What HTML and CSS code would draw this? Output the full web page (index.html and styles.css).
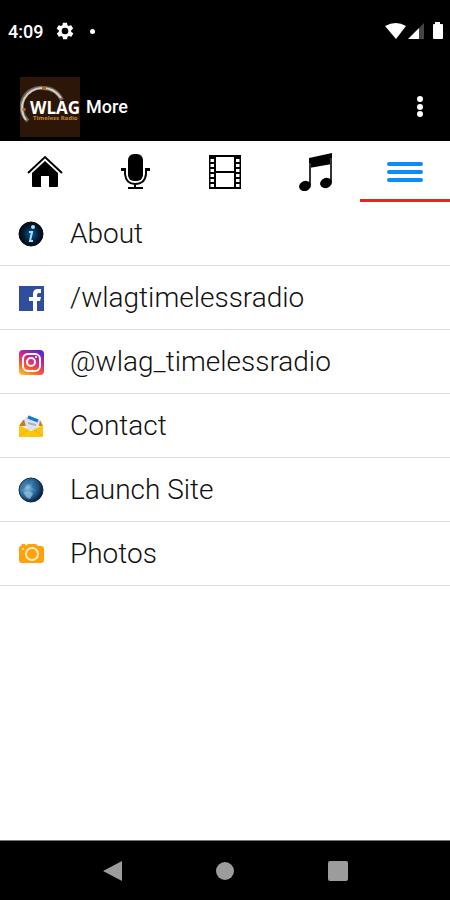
FILE: index.html
```html
<!DOCTYPE html>
<html lang="en">
  <head>
    <meta charset="UTF-8" />
    <meta name="viewport" content="width=device-width, initial-scale=1" />
    <title>WLAG - More</title>
    <link rel="stylesheet" href="styles.css">
  </head>
  <body>
    <div class="status-bar">
      <span class="clock">4:09</span>
      <svg class="gear" viewBox="0 0 24 24" width="20" height="20">
        <path fill="#fff" d="M19.4 13a7.500 7.500 0 0 0 0-2l2.100-1.600a.5.5 0 0 0 .1-.7l-2-3.400a.5.5 0 0 0-.6-.2l-2.500 1a7 7 0 0 0-1.700-1l-.4-2.700a.5.5 0 0 0-.5-.4h-4a.5.5 0 0 0-.5.4l-.4 2.700a7 7 0 0 0-1.700 1l-2.500-1a.5.5 0 0 0-.6.200l-2 3.400a.5.5 0 0 0 .1.700L4.600 11a7.500 7.500 0 0 0 0 2l-2.100 1.600a.5.5 0 0 0-.1.700l2 3.400c.1.200.4.300.6.200l2.500-1a7 7 0 0 0 1.700 1l.4 2.700c0 .2.200.4.5.4h4c.3 0 .5-.2.500-.4l.4-2.700a7 7 0 0 0 1.700-1l2.500 1c.2.1.5 0 .6-.2l2-3.400a.5.5 0 0 0-.1-.7zM12 16a4 4 0 1 1 0-8 4 4 0 0 1 0 8z" />
      </svg>
      <span class="dot"></span>
      <svg class="signals" viewBox="0 0 60 20" width="60" height="20">
        <path fill="#fff" d="M0 5Q11-1 21 5L11 18z" />
        <path fill="#fff" d="M23 18L34 7V18z" />
        <path fill="#444" d="M34 7L39 2V18H34z" />
        <path fill="#fff" d="M50 1h5v2h2q1 0 1 1v13q0 1-1 1h-8q-1 0-1-1V4q0-1 1-1h1z" />
      </svg>
    </div>

    <header class="app-bar">
      <svg class="logo" viewBox="0 0 60 60" width="60" height="60">
        <rect width="60" height="60" fill="#2b1607" />
        <path d="M8 44A19 19 0 0 1 23 11Q36 11 42 23" fill="none" stroke="#6f625b" stroke-width="4" />
        <path d="M6 43A20 20 0 0 1 23 11Q34 11 41 21" fill="none" stroke="#d5cdc8" stroke-width="2" />
        <path d="M22 11h4M4 31v3" stroke="#b5681c" stroke-width="3" />
        <text class="logo-name" x="10" y="37">WLAG</text>
        <text class="logo-tag" x="13" y="43">Timeless Radio</text>
      </svg>
      <h1>More</h1>
      <button class="overflow" type="button" aria-label="More options">
        <svg viewBox="0 0 24 24" width="24" height="24">
          <circle cx="12" cy="4" r="3" />
          <circle cx="12" cy="12" r="3" />
          <circle cx="12" cy="19" r="3" />
        </svg>
      </button>
    </header>

    <nav class="tabs">
      <a href="#home" aria-label="Home">
        <svg viewBox="0 0 36 36" width="36" height="36">
          <path d="M1 19L18 3L35 19" fill="none" stroke="#000" stroke-width="2" />
          <path d="M18 7L31 19V32Q31 33 30 33H22V22H14V33H6Q5 33 5 32V19z" />
        </svg>
      </a>
      <a href="#listen" aria-label="Listen">
        <svg viewBox="0 0 36 36" width="36" height="36">
          <rect x="11" y="0" width="15" height="27" rx="6" />
          <path d="M8 15V20Q9 30 18 30Q28 30 29 20V15M18 30V35" fill="none" stroke="#000" stroke-width="2" />
          <path d="M4 14h5v3H4zM28 14h5v3h-5zM11 33h15v2H11z" />
        </svg>
      </a>
      <a href="#videos" aria-label="Videos">
        <svg viewBox="0 0 36 36" width="36" height="36" fill="none" stroke="#000">
          <path d="M3 2H33V34H3zM8 2V34M28 2V34M8 18H28" stroke-width="2" />
          <path d="M5 4V33M31 4V33" stroke="#fff" stroke-width="3" />
          <path d="M5 3V34M31 3V34" stroke-width="4" stroke-dasharray="2 3" />
        </svg>
      </a>
      <a href="#music" aria-label="Music">
        <svg viewBox="0 0 36 38" width="36" height="38">
          <path d="M12 5L35 0V11L12 15z" />
          <path d="M13 10V32M34 5V29" fill="none" stroke="#333" stroke-width="2" />
          <ellipse cx="8" cy="33" rx="6" ry="5" transform="rotate(-20 8 33)" />
          <ellipse cx="29" cy="30" rx="6" ry="5" transform="rotate(-20 29 30)" />
        </svg>
      </a>
      <a class="active" href="#more" aria-label="More">
        <svg viewBox="0 0 36 36" width="36" height="36">
          <path d="M2 10H34M2 18H34M2 26H34" stroke="#0c8df5" stroke-width="4" stroke-linecap="round" />
        </svg>
      </a>
    </nav>

    <main>
      <ul class="menu">
        <li>
          <a href="#about">
            <svg viewBox="0 0 26 26" width="26" height="26">
              <defs>
                <radialGradient id="infoGlow">
                  <stop offset="0" stop-color="#0b5c98" />
                  <stop offset="0.600" stop-color="#03203a" />
                  <stop offset="1" stop-color="#04090f" />
                </radialGradient>
              </defs>
              <circle cx="13" cy="13" r="12" fill="url(#infoGlow)" stroke="#061018" />
              <circle cx="15" cy="6" r="2" fill="#9fe3ff" />
              <path d="M11 11H14L12 20H15" fill="none" stroke="#9fe3ff" stroke-width="2" />
            </svg>
            About
          </a>
        </li>
        <li>
          <a href="#facebook">
            <svg viewBox="0 0 26 26" width="26" height="26">
              <rect x="1" y="1" width="25" height="25" fill="#2f4f9e" />
              <path d="M15 26V16H11V12H15V9Q15 4 20 4H23V8H21Q19 8 19 10V12H23L22 16H19V26z" fill="#fff" />
            </svg>
            /wlagtimelessradio
          </a>
        </li>
        <li>
          <a href="#instagram">
            <svg viewBox="0 0 26 26" width="26" height="26">
              <defs>
                <linearGradient id="insta" x1="0.200" y1="1" x2="0.700" y2="0">
                  <stop offset="0" stop-color="#ffb52b" />
                  <stop offset="0.300" stop-color="#fa5a2a" />
                  <stop offset="0.600" stop-color="#d62a86" />
                  <stop offset="1" stop-color="#5b28cc" />
                </linearGradient>
              </defs>
              <rect x="1" y="1" width="25" height="25" rx="4" fill="url(#insta)" />
              <rect x="5" y="5" width="17" height="17" rx="5" fill="none" stroke="#fff" stroke-width="2" />
              <circle cx="13" cy="13" r="4" fill="none" stroke="#fff" stroke-width="2" />
              <circle cx="18" cy="8" r="1" fill="#fff" />
            </svg>
            @wlag_timelessradio
          </a>
        </li>
        <li>
          <a href="#contact">
            <svg viewBox="0 0 26 26" width="26" height="26">
              <path d="M1 13L5 7H22L25 13z" fill="#c77a2b" />
              <path d="M6 6L11 2L22 7L20 17H9z" fill="#dce5ec" />
              <path d="M10 4L20 8" stroke="#1976c9" stroke-width="3" />
              <path d="M10 10L18 12" stroke="#a6b4c1" stroke-width="2" />
              <path d="M1 12L13 18L25 12V23Q25 24 24 24H2Q1 24 1 23z" fill="#fcc60e" />
              <path d="M1 23L10 17M25 23L16 17" stroke="#eeb007" />
            </svg>
            Contact
          </a>
        </li>
        <li>
          <a href="#site">
            <svg viewBox="0 0 26 26" width="26" height="26">
              <defs>
                <radialGradient id="globe" cx="0.350" cy="0.400" r="0.650">
                  <stop offset="0" stop-color="#8cc4e4" />
                  <stop offset="0.500" stop-color="#3474a6" />
                  <stop offset="1" stop-color="#061d3f" />
                </radialGradient>
              </defs>
              <circle cx="13" cy="13" r="12" fill="url(#globe)" stroke="#12304f" />
              <path d="M4 6Q8 2 12 3L14 7L9 8L6 12L3 12zM15 5L20 6L22 11L17 12L13 10z" fill="#1c5584" opacity="0.400" />
              <path d="M6 15Q12 13 15 17L12 22Q7 21 6 15z" fill="#a6d5e8" opacity="0.600" />
            </svg>
            Launch Site
          </a>
        </li>
        <li>
          <a href="#photos">
            <svg viewBox="0 0 26 26" width="26" height="26">
              <path d="M3 5L4 3H7L8 5L10 3H18L20 5H23Q26 5 26 8V19Q26 22 23 22H4Q1 22 1 19V7Q1 5 3 5z" fill="#ffa10a" />
              <circle cx="14" cy="13" r="6" fill="none" stroke="#ffecc8" stroke-width="2" />
              <circle cx="5" cy="8" r="1" fill="#ffecc8" />
            </svg>
            Photos
          </a>
        </li>
      </ul>
    </main>

    <footer class="nav-bar">
      <button type="button" aria-label="Back">
        <svg viewBox="0 0 22 22" width="22" height="22"><path d="M20 1V21L1 11z" /></svg>
      </button>
      <button type="button" aria-label="Home">
        <svg viewBox="0 0 22 22" width="22" height="22"><circle cx="11" cy="11" r="9" /></svg>
      </button>
      <button type="button" aria-label="Recent apps">
        <svg viewBox="0 0 22 22" width="22" height="22"><rect x="1" y="1" width="20" height="20" rx="2" /></svg>
      </button>
    </footer>
  </body>
</html>
```

FILE: styles.css
```css
* {
  box-sizing: border-box;
}

body {
  margin: 0;
  min-height: 100vh;
  display: flex;
  flex-direction: column;
  font-family: Roboto, Arial, sans-serif;
  background-color: #fff;
  color: #111;
}

svg {
  display: block;
  flex-shrink: 0;
}

a {
  color: inherit;
  text-decoration: none;
}

button {
  padding: 0;
  border: none;
  background: none;
  cursor: pointer;
}

/* Status bar */
.status-bar {
  display: flex;
  align-items: center;
  height: 62px;
  padding: 0 5px 0 8px;
  background-color: #000;
  color: #fff;
}

.clock {
  font-size: 18px;
  font-weight: 500;
}

.gear {
  margin-left: 12px;
}

.dot {
  width: 5px;
  height: 5px;
  margin-left: 15px;
  border-radius: 50%;
  background-color: #fff;
}

.signals {
  margin-left: auto;
}

/* App bar */
.app-bar {
  display: flex;
  align-items: center;
  height: 79px;
  padding: 10px 18px 0 20px;
  background-color: #000;
  color: #fff;
}

.app-bar h1 {
  margin: 0 0 0 6px;
  font-size: 18px;
  font-weight: 500;
}

.logo-name {
  font-family: "Open Sans", sans-serif;
  font-size: 17px;
  font-weight: 700;
  fill: #fff;
}

.logo-tag {
  font-family: "Open Sans", sans-serif;
  font-size: 6px;
  font-weight: 700;
  fill: #c98a20;
}

.overflow {
  margin-left: auto;
}

.overflow svg {
  fill: #fff;
}

/* Tabs */
.tabs {
  display: grid;
  grid-template-columns: repeat(5, 1fr);
}

.tabs a {
  display: flex;
  align-items: center;
  justify-content: center;
  height: 61px;
  padding-top: 4px;
  border-bottom: 3px solid transparent;
}

.tabs .active {
  border-bottom-color: #e3261f;
}

/* Menu */
main {
  flex: 1;
}

.menu {
  margin: 0;
  padding: 0;
  list-style: none;
}

.menu a {
  display: flex;
  align-items: center;
  gap: 26px;
  height: 64px;
  padding: 0 18px;
  border-bottom: 1px solid #dcdcdc;
  font-size: 28px;
  font-weight: 300;
}

/* Android navigation */
.nav-bar {
  display: grid;
  grid-template-columns: repeat(3, 25%);
  align-items: center;
  justify-content: center;
  justify-items: center;
  height: 60px;
  background-color: #000;
  border-top: 1px solid #777;
}

.nav-bar svg {
  fill: #9c9c9c;
}
```
